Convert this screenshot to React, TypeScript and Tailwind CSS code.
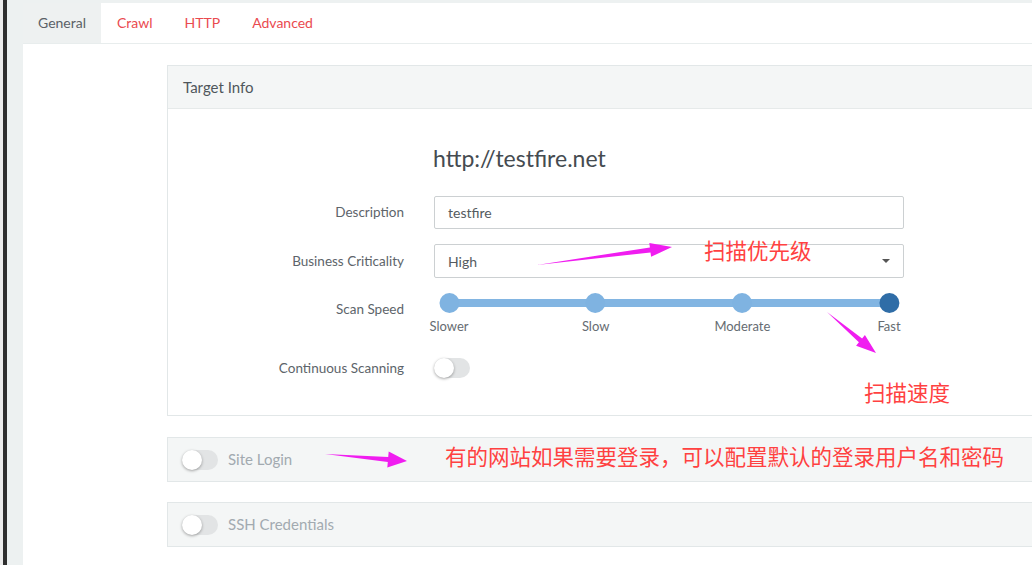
import React from 'react';

const tabs = ['General', 'Crawl', 'HTTP', 'Advanced'];

const Toggle: React.FC = () => (
    <div className="relative w-[36px] h-[20px] rounded-full bg-[#e2e4e5]">
        <div className="absolute left-0 top-0 w-[20px] h-[20px] rounded-full bg-white shadow-[0_1px_3px_rgba(0,0,0,0.35)]" />
    </div>
);

const FormRow: React.FC<{ label: string; children: React.ReactNode; className?: string }> = ({ label, children, className }) => (
    <div className={`flex items-center ${className ?? ''}`}>
        <div className="w-[236px] shrink-0 text-right text-[13.5px] text-[#5d646a]">{label}</div>
        <div className="ml-[30px] w-[470px] shrink-0">{children}</div>
    </div>
);

const speeds = ['Slower', 'Slow', 'Moderate', 'Fast'];

const SpeedSlider: React.FC = () => (
    <div className="relative h-[42px]">
        <div className="absolute left-[15px] right-[15px] top-[6px] h-[8px] rounded-full bg-[#82b5e2]" />
        {speeds.map((s, i) => (
            <div key={s} className="absolute top-0 -translate-x-1/2 flex flex-col items-center" style={{ left: `${15 + i * (440 / 3)}px` }}>
                <div className={`w-[20px] h-[20px] rounded-full ${i === 3 ? 'bg-[#2f6da7]' : 'bg-[#7fb3e1]'}`} />
                <span className="mt-[5px] text-[13px] leading-[16px] text-[#666c72]">{s}</span>
            </div>
        ))}
    </div>
);

const CollapsedPanel: React.FC<{ title: string; className?: string }> = ({ title, className }) => (
    <div className={`h-[45px] w-[900px] flex items-center pl-[14px] bg-[#f4f6f6] border border-r-0 border-[#e2e7e8] ${className ?? ''}`}>
        <Toggle />
        <span className="ml-[10px] text-[15px] text-[#a2aab0]">{title}</span>
    </div>
);

const App: React.FC = () => {
    return (
        <div className="relative w-[1032px] h-[565px] overflow-hidden flex bg-[#edf1f1] font-['Lato',sans-serif]">
            <div className="w-[3px] shrink-0 bg-[#ececec]" />
            <div className="w-[4px] shrink-0 bg-[#2f2f2f]" />
            <div className="w-[16px] shrink-0 bg-[#edf1f1]" />
            <div className="flex-1 min-w-0 overflow-hidden flex flex-col pt-[3px]">
                {/* tabs */}
                <div className="flex h-[41px] bg-white border-b border-[#e8eded]">
                    {tabs.map((t, i) => (
                        <div
                            key={t}
                            className={`flex items-center pb-[2px] text-[14px] ${i === 0 ? 'bg-[#eef1f1] text-[#5b6167] w-[78px] justify-center' : 'text-[#ea4a4f] px-[16px]'}`}
                        >
                            {t}
                        </div>
                    ))}
                </div>

                <div className="flex-1 bg-white pl-[144px] pt-[21px]">
                    {/* Target Info */}
                    <div className="w-[900px] border border-r-0 border-[#e2e7e8]">
                        <div className="h-[43px] flex items-center pl-[15px] bg-[#f4f6f6] border-b border-[#e6eaea] text-[15px] text-[#4f565c]">
                            Target Info
                        </div>
                        <div className="h-[306px] pt-[35px]">
                            <div className="pl-[265px] text-[23px] leading-[28px] text-[#454b50]">http://testfire.net</div>
                            <FormRow label="Description" className="mt-[24px]">
                                <div className="h-[33px] flex items-center px-[13px] border border-[#ccd0d2] rounded-[2px] text-[14px] text-[#555b60]">testfire</div>
                            </FormRow>
                            <FormRow label="Business Criticality" className="mt-[15px]">
                                <div className="h-[34px] flex items-center justify-between px-[13px] border border-[#ccd0d2] rounded-[2px] text-[14px] text-[#555b60]">
                                    <span>High</span>
                                    <span className="w-0 h-0 border-l-[4px] border-r-[4px] border-t-[4px] border-l-transparent border-r-transparent border-t-[#555]" />
                                </div>
                            </FormRow>
                            <div className="flex mt-[15px]">
                                <div className="w-[236px] shrink-0 pt-[6px] text-right text-[13.5px] text-[#5d646a]">Scan Speed</div>
                                <div className="ml-[30px] w-[470px] shrink-0">
                                    <SpeedSlider />
                                </div>
                            </div>
                            <FormRow label="Continuous Scanning" className="mt-[23px]">
                                <Toggle />
                            </FormRow>
                        </div>
                    </div>

                    <CollapsedPanel title="Site Login" className="mt-[21px]" />
                    <CollapsedPanel title="SSH Credentials" className="mt-[20px]" />
                </div>
            </div>

            {/* annotations */}
            <svg className="absolute inset-0 pointer-events-none" width="1032" height="565">
                <polygon fill="#f01df0" points="537,265 650.5,252.4 651.1,256.8 672,247 649.3,243 649.9,247.4" />
                <polygon fill="#f01df0" points="827,312 862.1,338.5 864.9,335 876,353 856.1,345.8 858.9,342.3" />
                <polygon fill="#f01df0" points="325,454 388.2,456.9 388.7,451.4 407,461 387.3,467.4 387.8,461.9" />
            </svg>
            <div className="absolute left-[704px] top-[236px] text-[21.5px] leading-[28px] text-[#ff4141] font-['Noto_Sans_CJK_SC',sans-serif]">扫描优先级</div>
            <div className="absolute left-[864px] top-[378px] text-[21.5px] leading-[28px] text-[#ff4141] font-['Noto_Sans_CJK_SC',sans-serif]">扫描速度</div>
            <div className="absolute left-[445px] top-[442px] text-[21.5px] leading-[28px] text-[#ff4141] font-['Noto_Sans_CJK_SC',sans-serif] whitespace-nowrap">
                有的网站如果需要登录，可以配置默认的登录用户名和密码
            </div>
        </div>
    );
};

export default App;
